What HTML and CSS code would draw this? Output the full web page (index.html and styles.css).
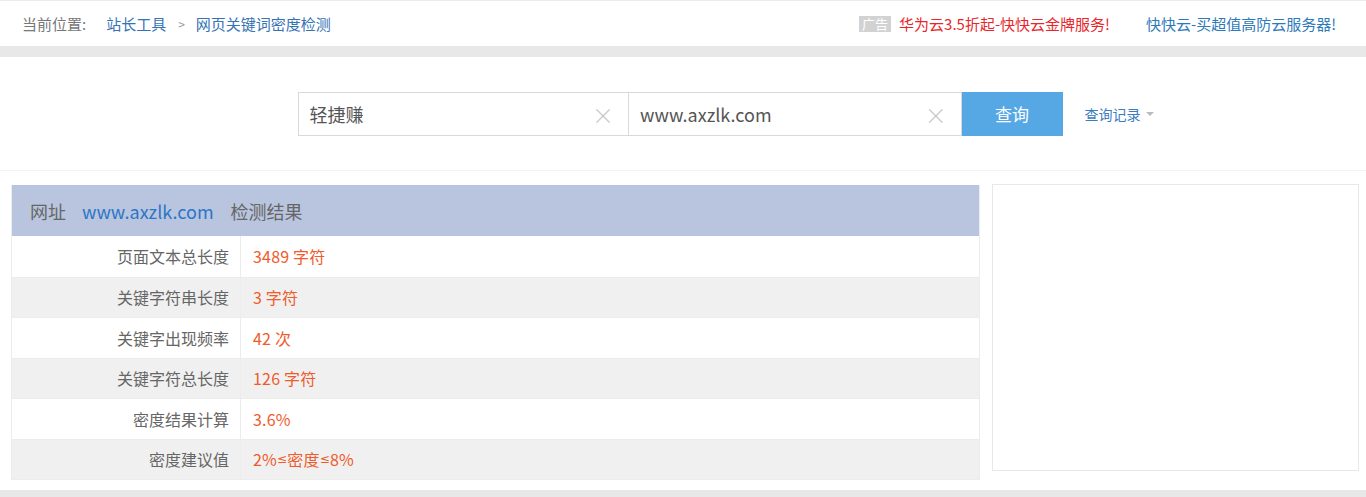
FILE: index.html
```html
<!DOCTYPE html>
<html lang="zh-CN">
<head>
    <meta charset="UTF-8">
    <meta name="viewport" content="width=device-width, initial-scale=1.0">
    <title>网页关键词密度检测</title>
    <link rel="stylesheet" href="styles.css">
</head>
<body>
    <nav class="topbar">
        <div class="crumbs">
            <span class="crumb_label">当前位置:</span>
            <a href="#">站长工具</a>
            <span class="crumb_sep">&gt;</span>
            <a href="#">网页关键词密度检测</a>
        </div>
        <div class="ads">
            <span class="ad_tag">广告</span>
            <a class="ad_red" href="#">华为云3.5折起-快快云金牌服务!</a>
            <a class="ad_blue" href="#">快快云-买超值高防云服务器!</a>
        </div>
    </nav>

    <section class="search">
        <div></div>
        <div class="search_form">
            <div class="field field1">
                <span class="field_text">轻捷赚</span>
                <span class="clear">&times;</span>
            </div>
            <div class="field field2">
                <span class="field_text">www.axzlk.com</span>
                <span class="clear">&times;</span>
            </div>
            <button class="search_btn">查询</button>
        </div>
        <div class="history">
            <a href="#">查询记录</a>
            <span class="caret"></span>
        </div>
    </section>

    <section class="result">
        <div class="result_table">
            <div class="result_head">
                <span>网址</span>
                <a href="#">www.axzlk.com</a>
                <span>检测结果</span>
            </div>
            <div class="row">
                <div class="label">页面文本总长度</div>
                <div class="value">3489 字符</div>
            </div>
            <div class="row">
                <div class="label">关键字符串长度</div>
                <div class="value">3 字符</div>
            </div>
            <div class="row">
                <div class="label">关键字出现频率</div>
                <div class="value">42 次</div>
            </div>
            <div class="row">
                <div class="label">关键字符总长度</div>
                <div class="value">126 字符</div>
            </div>
            <div class="row">
                <div class="label">密度结果计算</div>
                <div class="value">3.6%</div>
            </div>
            <div class="row">
                <div class="label">密度建议值</div>
                <div class="value">2%<span class="le">≤</span>密度<span class="le">≤</span>8%</div>
            </div>
        </div>
        <div class="side_box"></div>
    </section>

    <div class="bottom_band"></div>
</body>
</html>
```

FILE: styles.css
```css
*{
    margin:0;
    padding:0;
    box-sizing:border-box;
}
body{
    background-color:#fff;
    font-family:"Noto Sans CJK SC", "Open Sans", sans-serif;
    color:#666;
}
a{
    text-decoration:none;
}
.topbar{
    height:57px;
    border-top:1px solid #ececec;
    border-bottom:11px solid #e8e8e8;
    display:flex;
    justify-content:space-between;
    align-items:center;
    padding:0 30px 0 22px;
    font-size:15px;
}
.crumbs{
    display:flex;
    align-items:center;
}
.crumb_label{
    color:#777;
    margin-right:20px;
}
.crumbs a{
    color:#3673b4;
}
.crumb_sep{
    color:#999;
    font-size:12px;
    margin:0 11px 0 12px;
}
.ads{
    display:flex;
    align-items:center;
}
.ad_tag{
    background-color:#d2d2d2;
    color:#fff;
    font-size:13px;
    padding:0 3px;
    line-height:16px;
    margin-right:8px;
}
.ad_red{
    color:#e8262b;
    margin-right:36px;
}
.ad_blue{
    color:#2e7ab9;
}
.search{
    display:grid;
    grid-template-columns:1fr 765px 1fr;
    align-items:center;
    height:114px;
    border-bottom:1px solid #f3f3f3;
    padding-right:6px;
}
.search_form{
    display:flex;
    height:44px;
}
.field{
    display:flex;
    align-items:center;
    justify-content:space-between;
    border:1px solid #d9d9d9;
    padding:0 14px 0 11px;
    height:44px;
}
.field1{
    width:332px;
}
.field2{
    width:333px;
    border-left:none;
}
.field_text{
    font-size:18px;
    color:#555;
}
.clear{
    color:#c4c4c4;
    font-size:22px;
    font-weight:300;
    line-height:1;
}
.search_btn{
    width:101px;
    height:44px;
    border:none;
    background-color:#55a8e4;
    color:#fff;
    font-family:inherit;
    font-size:17px;
}
.history{
    padding-left:22px;
    display:flex;
    align-items:center;
}
.history a{
    color:#3a7cc0;
    font-size:14px;
}
.caret{
    display:inline-block;
    margin-left:5px;
    border-left:4px solid transparent;
    border-right:4px solid transparent;
    border-top:4px solid #bbb;
}
.result{
    display:flex;
    align-items:flex-start;
    gap:12px;
    padding:14px 7px 10px 11px;
}
.result_table{
    width:969px;
    border-left:1px solid #ececec;
    border-right:1px solid #ececec;
    border-bottom:1px solid #ececec;
}
.result_head{
    height:51px;
    background-color:#b9c5de;
    display:flex;
    align-items:center;
    padding-left:18px;
    font-size:18px;
    color:#666;
}
.result_head a{
    color:#2b76c8;
    margin:0 17px 0 16px;
}
.row{
    display:flex;
    height:40.5px;
    border-top:1px solid #ececec;
    font-size:16px;
}
.row:nth-child(odd){
    background-color:#f0f0f0;
}
.row:nth-child(2){
    border-top:none;
}
.label{
    width:229px;
    padding-right:11px;
    border-right:1px solid #ececec;
    display:flex;
    align-items:center;
    justify-content:flex-end;
    color:#666;
}
.value{
    display:flex;
    align-items:center;
    padding-left:12px;
    color:#ef5b2b;
    letter-spacing:0.2px;
}
.le{
    font-family:"DejaVu Sans", sans-serif;
    font-size:12px;
}
.side_box{
    width:367px;
    height:287px;
    margin-top:-1px;
    border:1px solid #e8e8e8;
}
.bottom_band{
    height:20px;
    background-color:#e8e8e8;
}
```
